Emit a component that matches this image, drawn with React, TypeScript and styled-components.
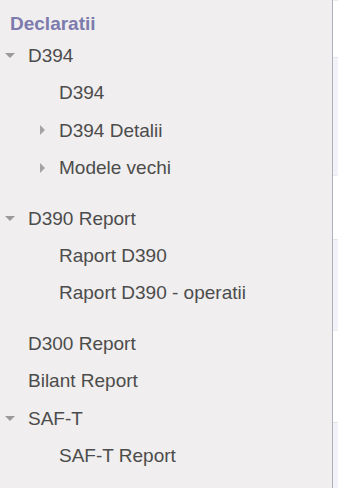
import React from "react";
import styled, { createGlobalStyle } from "styled-components";

const Global = createGlobalStyle`
  html, body { margin: 0; padding: 0; background: #ffffff; }
  body { font-family: "Liberation Sans", Arial, sans-serif; }
  * { box-sizing: border-box; }
`;

const Page = styled.div`
  display: flex;
  height: 488px;
  width: 338px;
  overflow: hidden;
`;

const Sidebar = styled.nav`
  width: 333px;
  flex: none;
  background: #f0eeee;
  border-right: 1px solid #aeb1b9;
  font-size: 19px;
  color: #4c4c4c;
`;

const Heading = styled.div`
  padding: 12px 0 1px 10px;
  line-height: 24px;
  font-weight: bold;
  color: #7c7bad;
`;

const Section = styled.div<{ $gap: boolean }>`
  margin-bottom: ${(p) => (p.$gap ? "13.4px" : "0")};
`;

const Row = styled.div<{ $indent: number; $slot: number }>`
  display: flex;
  align-items: center;
  height: 37.33px;
  line-height: 37.33px;
  padding-left: ${(p) => p.$indent}px;
  white-space: nowrap;
`;

const Slot = styled.span<{ $w: number }>`
  display: inline-flex;
  align-items: center;
  width: ${(p) => p.$w}px;
  flex: none;
`;

const CaretDown = styled.span`
  width: 0;
  height: 0;
  border-left: 5px solid transparent;
  border-right: 5px solid transparent;
  border-top: 5px solid #9a9a9a;
`;

const CaretRight = styled.span`
  width: 0;
  height: 0;
  border-top: 5px solid transparent;
  border-bottom: 5px solid transparent;
  border-left: 5px solid #a3a3a3;
`;

const Content = styled.div`
  flex: 1;
  display: flex;
  flex-direction: column;
`;

const Band = styled.div<{ $h: number; $tint: boolean }>`
  height: ${(p) => p.$h}px;
  flex: none;
  background: ${(p) => (p.$tint ? "#f2f2f8" : "#ffffff")};
  border-top: 1px solid ${(p) => (p.$tint ? "#e3e3ea" : "#ececf0")};
`;

type Item = { label: string; caret?: "right" };
type Group = { label: string; open?: boolean; children?: Item[]; gap?: boolean };

const groups: Group[] = [
  {
    label: "D394",
    open: true,
    gap: true,
    children: [{ label: "D394" }, { label: "D394 Detalii", caret: "right" }, { label: "Modele vechi", caret: "right" }],
  },
  {
    label: "D390 Report",
    open: true,
    gap: true,
    children: [{ label: "Raport D390" }, { label: "Raport D390 - operatii" }],
  },
  { label: "D300 Report" },
  { label: "Bilant Report" },
  { label: "SAF-T", open: true, children: [{ label: "SAF-T Report" }] },
];

const bands: { h: number; tint: boolean }[] = [
  { h: 57, tint: false },
  { h: 118, tint: true },
  { h: 64, tint: false },
  { h: 91, tint: true },
  { h: 92, tint: false },
  { h: 66, tint: true },
];

export default function App() {
  return (
    <>
      <Global />
      <Page>
        <Sidebar>
          <Heading>Declaratii</Heading>
          {groups.map((g, i) => (
            <Section key={i} $gap={!!g.gap}>
              <Row $indent={5} $slot={23}>
                <Slot $w={23}>{g.open ? <CaretDown /> : null}</Slot>
                {g.label}
              </Row>
              {g.children?.map((c, j) => (
                <Row key={j} $indent={40} $slot={19}>
                  <Slot $w={19}>{c.caret === "right" ? <CaretRight /> : null}</Slot>
                  {c.label}
                </Row>
              ))}
            </Section>
          ))}
        </Sidebar>
        <Content>
          {bands.map((b, i) => (
            <Band key={i} $h={b.h} $tint={b.tint} />
          ))}
        </Content>
      </Page>
    </>
  );
}
